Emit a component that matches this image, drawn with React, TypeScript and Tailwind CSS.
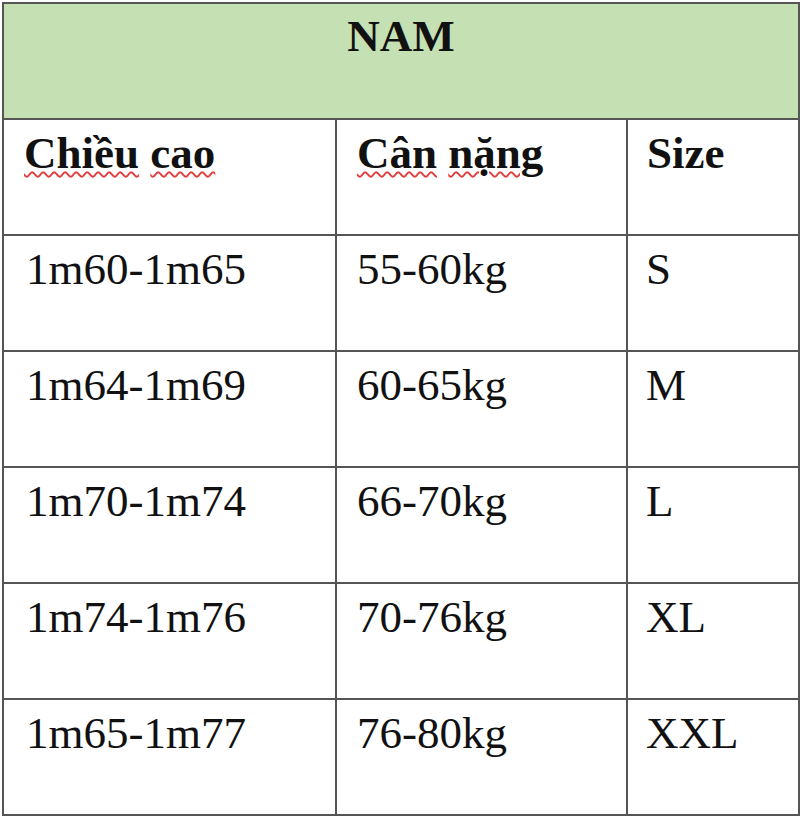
import React from "react";

const rows = [
  ["1m60-1m65", "55-60kg", "S"],
  ["1m64-1m69", "60-65kg", "M"],
  ["1m70-1m74", "66-70kg", "L"],
  ["1m74-1m76", "70-76kg", "XL"],
  ["1m65-1m77", "76-80kg", "XXL"],
];

function Wavy({ children }: { children: React.ReactNode }) {
  return (
    <span className="underline decoration-wavy decoration-[#e03c3c] decoration-[1.5px] underline-offset-[3px]">
      {children}
    </span>
  );
}

export default function App() {
  return (
    <div className="w-[800px] h-[816px] bg-white pt-[2px] pl-[2px]" style={{ fontFamily: '"Liberation Serif", "Times New Roman", serif' }}>
      <table className="border-collapse w-[796px] table-fixed text-[45px] leading-[52px] text-[#111]">
        <colgroup>
          <col className="w-[333px]" />
          <col className="w-[291px]" />
          <col className="w-[172px]" />
        </colgroup>
        <tbody>
          <tr className="h-[116px]">
            <td colSpan={3} className="border-2 border-[#555] bg-[#c5e0b3] text-center align-top pt-[6px] font-bold">
              NAM
            </td>
          </tr>
          <tr className="h-[116px]">
            <td className="border-2 border-[#555] align-top pt-[7px] pl-[20px] font-bold">
              <Wavy>Chiều</Wavy> <Wavy>cao</Wavy>
            </td>
            <td className="border-2 border-[#555] align-top pt-[7px] pl-[20px] font-bold">
              <Wavy>Cân</Wavy> <Wavy>nặng</Wavy>
            </td>
            <td className="border-2 border-[#555] align-top pt-[7px] pl-[19px] font-bold">Size</td>
          </tr>
          {rows.map((r) => (
            <tr key={r[0] + r[2]} className="h-[116px]">
              <td className="border-2 border-[#555] align-top pt-[7px] pl-[22px]">{r[0]}</td>
              <td className="border-2 border-[#555] align-top pt-[7px] pl-[20px]">{r[1]}</td>
              <td className="border-2 border-[#555] align-top pt-[7px] pl-[18px]">{r[2]}</td>
            </tr>
          ))}
        </tbody>
      </table>
    </div>
  );
}
